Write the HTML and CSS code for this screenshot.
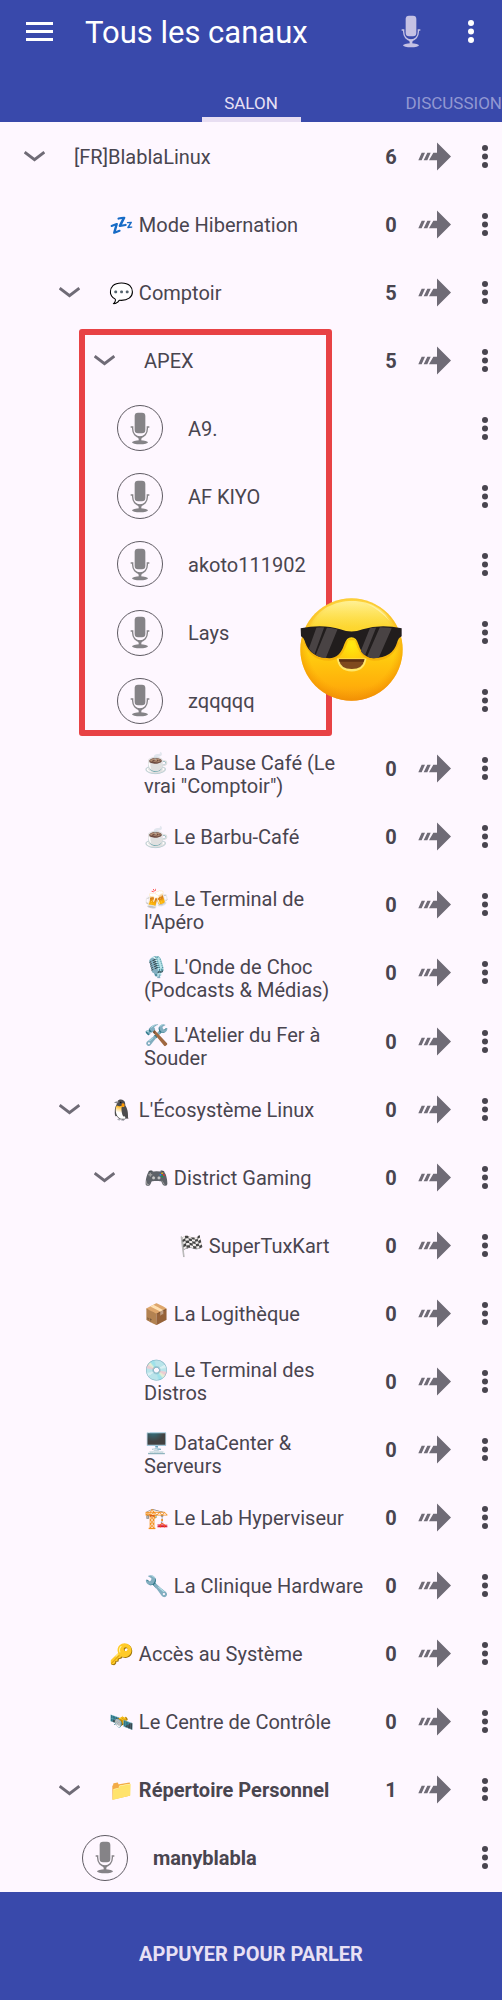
FILE: index.html
```html
<!DOCTYPE html>
<html lang="fr">
<head>
<meta charset="utf-8">
<meta name="viewport" content="width=device-width, initial-scale=1">
<title>Tous les canaux</title>
<link rel="stylesheet" href="styles.css">
</head>
<body>
<svg class="sprite" aria-hidden="true">
  <symbol id="chevron" viewBox="0 0 64 36"><path d="M2 6 32 29 62 6" fill="none" stroke="currentColor" stroke-width="9"/></symbol>
  <symbol id="dots" viewBox="0 0 6 23"><circle cx="3" cy="3" r="3"/><circle cx="3" cy="11.5" r="3"/><circle cx="3" cy="20" r="3"/></symbol>
  <symbol id="join" viewBox="0 0 99 86"><path d="M57 1 99 43 57 85V54H33L46 32H57ZM1 54 11 32H21L11 54ZM17 54 28 32H38L28 54Z"/></symbol>
  <symbol id="mic" viewBox="0 0 66 99">
    <rect x="17" y="2" width="32" height="62" rx="10"/>
    <path d="M5 45H11V50C11 65 20 75 33 75S55 65 55 50V45H61" fill="none" stroke="currentColor" stroke-width="4"/>
    <path d="M24 74H42L37 80V87H29V80Z"/>
    <ellipse cx="33" cy="91" rx="24" ry="6"/>
  </symbol>
</svg>

<header class="app-bar">
  <div class="toolbar">
    <button class="icon-button" aria-label="Menu"><svg class="icon-menu" viewBox="0 0 27 19"><path d="M0 1.5H27M0 9.5H27M0 17.5H27" stroke="currentColor" stroke-width="3"/></svg></button>
    <h1 class="title">Tous les canaux</h1>
    <button class="icon-button mic-button" aria-label="Microphone"><svg class="icon-mic"><use href="#mic"/></svg></button>
    <button class="icon-button" aria-label="Plus d'options"><svg class="icon-dots"><use href="#dots"/></svg></button>
  </div>
  <nav class="tabs">
    <a class="tab tab-active" href="#salon">SALON</a>
    <a class="tab tab-next" href="#discussion">DISCUSSION</a>
  </nav>
</header>

<main class="channels" id="salon">
  <div class="row level-0"><button class="toggle" aria-label="Réduire"><svg class="icon-chevron"><use href="#chevron"/></svg></button><span class="name">[FR]BlablaLinux</span><span class="count">6</span><button class="join" aria-label="Rejoindre"><svg class="icon-join"><use href="#join"/></svg></button><button class="more" aria-label="Options"><svg class="icon-dots"><use href="#dots"/></svg></button></div>
  <div class="row level-1"><span class="toggle"></span><span class="name">💤 Mode Hibernation</span><span class="count">0</span><button class="join" aria-label="Rejoindre"><svg class="icon-join"><use href="#join"/></svg></button><button class="more" aria-label="Options"><svg class="icon-dots"><use href="#dots"/></svg></button></div>
  <div class="row level-1"><button class="toggle" aria-label="Réduire"><svg class="icon-chevron"><use href="#chevron"/></svg></button><span class="name">💬 Comptoir</span><span class="count">5</span><button class="join" aria-label="Rejoindre"><svg class="icon-join"><use href="#join"/></svg></button><button class="more" aria-label="Options"><svg class="icon-dots"><use href="#dots"/></svg></button></div>

  <section class="highlighted">
    <div class="row level-2"><button class="toggle" aria-label="Réduire"><svg class="icon-chevron"><use href="#chevron"/></svg></button><span class="name">APEX</span><span class="count">5</span><button class="join" aria-label="Rejoindre"><svg class="icon-join"><use href="#join"/></svg></button><button class="more" aria-label="Options"><svg class="icon-dots"><use href="#dots"/></svg></button></div>
    <div class="row user level-2"><span class="avatar"><svg class="icon-mic"><use href="#mic"/></svg></span><span class="name">A9.</span><button class="more" aria-label="Options"><svg class="icon-dots"><use href="#dots"/></svg></button></div>
    <div class="row user level-2"><span class="avatar"><svg class="icon-mic"><use href="#mic"/></svg></span><span class="name">AF KIYO</span><button class="more" aria-label="Options"><svg class="icon-dots"><use href="#dots"/></svg></button></div>
    <div class="row user level-2"><span class="avatar"><svg class="icon-mic"><use href="#mic"/></svg></span><span class="name">akoto111902</span><button class="more" aria-label="Options"><svg class="icon-dots"><use href="#dots"/></svg></button></div>
    <div class="row user level-2"><span class="avatar"><svg class="icon-mic"><use href="#mic"/></svg></span><span class="name">Lays</span><button class="more" aria-label="Options"><svg class="icon-dots"><use href="#dots"/></svg></button></div>
    <div class="row user level-2"><span class="avatar"><svg class="icon-mic"><use href="#mic"/></svg></span><span class="name">zqqqqq</span><button class="more" aria-label="Options"><svg class="icon-dots"><use href="#dots"/></svg></button></div>
    <div class="frame">
      <svg class="face" viewBox="30 23 310 310" role="img" aria-label="Visage avec lunettes de soleil">
        <defs>
          <linearGradient id="skin" x1="0" y1="0" x2="0" y2="1"><stop offset="0" stop-color="#ffe04a"/><stop offset=".25" stop-color="#fdd835"/><stop offset=".55" stop-color="#ffcd0f"/><stop offset=".85" stop-color="#ffaf0a"/><stop offset="1" stop-color="#f79a0c"/></linearGradient>
          <radialGradient id="rim" cx=".5" cy=".47" r=".53"><stop offset=".8" stop-color="#f59a00" stop-opacity="0"/><stop offset="1" stop-color="#ee8a00" stop-opacity=".65"/></radialGradient>
          <radialGradient id="nose" cx=".5" cy=".5" r=".5"><stop offset="0" stop-color="#ffea10"/><stop offset="1" stop-color="#ffe500" stop-opacity="0"/></radialGradient>
          <linearGradient id="shine" x1="0" y1="0" x2="0" y2="1"><stop offset="0" stop-color="#fff3a0" stop-opacity=".9"/><stop offset="1" stop-color="#ffe45c" stop-opacity="0"/></linearGradient>
          <clipPath id="lenses"><path d="M46 117Q100 104 151 119 176 126 165 158 155 202 118 204 68 205 53 165Z"/><path d="M322 117Q268 104 217 119 192 126 203 158 213 202 250 204 300 205 315 165Z"/></clipPath>
        </defs>
        <circle cx="185" cy="178" r="154" fill="url(#skin)"/>
        <circle cx="185" cy="178" r="154" fill="url(#rim)"/>
        <path d="M60 110C82 55 135 32 188 32S294 58 314 108C270 92 220 112 185 112S100 92 60 110Z" fill="url(#shine)"/>
        <path d="M228 39Q277 53 301 94 270 59 228 39Z" fill="#fff6b8" opacity=".7"/>
        <ellipse cx="185" cy="165" rx="42" ry="48" fill="url(#nose)"/>
        <path d="M42 158Q62 213 118 212 160 211 176 145H194Q210 211 252 212 308 213 328 158L315 150H55Z" fill="#e88c00" opacity=".35"/>
        <path d="M141 205H230Q226 243 186 244 145 243 141 205Z" fill="#ffe76a"/>
        <path d="M147 207H224Q219 237 186 237 152 237 147 207Z" fill="#7f4a1e"/>
        <path d="M147 207H224L222 215H149Z" fill="#5d3113"/>
        <path d="M32 114Q98 100 151 117 169 124 185 124T219 117Q272 100 336 114V138Q326 142 322 158 309 203 252 204 219 204 206 163 200 141 185 141T163 163Q150 204 118 204 61 203 46 158 42 142 33 138Z" fill="#211d1d"/>
        <g clip-path="url(#lenses)" fill="#494344"><path d="M82 105H105L69 205H46ZM114 105H148L105 210H71Z"/><path d="M244 105H262L220 210H202ZM273 105H310L264 210H227Z"/></g>
      </svg>
    </div>
  </section>

  <div class="row level-2"><span class="toggle"></span><span class="name name-tall">☕ La Pause Café (Le vrai "Comptoir")</span><span class="count">0</span><button class="join" aria-label="Rejoindre"><svg class="icon-join"><use href="#join"/></svg></button><button class="more" aria-label="Options"><svg class="icon-dots"><use href="#dots"/></svg></button></div>
  <div class="row level-2"><span class="toggle"></span><span class="name">☕ Le Barbu-Café</span><span class="count">0</span><button class="join" aria-label="Rejoindre"><svg class="icon-join"><use href="#join"/></svg></button><button class="more" aria-label="Options"><svg class="icon-dots"><use href="#dots"/></svg></button></div>
  <div class="row level-2"><span class="toggle"></span><span class="name name-tall">🍻 Le Terminal de l'Apéro</span><span class="count">0</span><button class="join" aria-label="Rejoindre"><svg class="icon-join"><use href="#join"/></svg></button><button class="more" aria-label="Options"><svg class="icon-dots"><use href="#dots"/></svg></button></div>
  <div class="row level-2"><span class="toggle"></span><span class="name name-tall">🎙️ L'Onde de Choc (Podcasts &amp; Médias)</span><span class="count">0</span><button class="join" aria-label="Rejoindre"><svg class="icon-join"><use href="#join"/></svg></button><button class="more" aria-label="Options"><svg class="icon-dots"><use href="#dots"/></svg></button></div>
  <div class="row level-2"><span class="toggle"></span><span class="name name-tall">🛠️ L'Atelier du Fer à Souder</span><span class="count">0</span><button class="join" aria-label="Rejoindre"><svg class="icon-join"><use href="#join"/></svg></button><button class="more" aria-label="Options"><svg class="icon-dots"><use href="#dots"/></svg></button></div>
  <div class="row level-1"><button class="toggle" aria-label="Réduire"><svg class="icon-chevron"><use href="#chevron"/></svg></button><span class="name">🐧 L'Écosystème Linux</span><span class="count">0</span><button class="join" aria-label="Rejoindre"><svg class="icon-join"><use href="#join"/></svg></button><button class="more" aria-label="Options"><svg class="icon-dots"><use href="#dots"/></svg></button></div>
  <div class="row level-2"><button class="toggle" aria-label="Réduire"><svg class="icon-chevron"><use href="#chevron"/></svg></button><span class="name">🎮 District Gaming</span><span class="count">0</span><button class="join" aria-label="Rejoindre"><svg class="icon-join"><use href="#join"/></svg></button><button class="more" aria-label="Options"><svg class="icon-dots"><use href="#dots"/></svg></button></div>
  <div class="row level-3"><span class="toggle"></span><span class="name">🏁 SuperTuxKart</span><span class="count">0</span><button class="join" aria-label="Rejoindre"><svg class="icon-join"><use href="#join"/></svg></button><button class="more" aria-label="Options"><svg class="icon-dots"><use href="#dots"/></svg></button></div>
  <div class="row level-2"><span class="toggle"></span><span class="name">📦 La Logithèque</span><span class="count">0</span><button class="join" aria-label="Rejoindre"><svg class="icon-join"><use href="#join"/></svg></button><button class="more" aria-label="Options"><svg class="icon-dots"><use href="#dots"/></svg></button></div>
  <div class="row level-2"><span class="toggle"></span><span class="name">💿 Le Terminal des Distros</span><span class="count">0</span><button class="join" aria-label="Rejoindre"><svg class="icon-join"><use href="#join"/></svg></button><button class="more" aria-label="Options"><svg class="icon-dots"><use href="#dots"/></svg></button></div>
  <div class="row level-2"><span class="toggle"></span><span class="name name-tall">🖥️ DataCenter &amp; Serveurs</span><span class="count">0</span><button class="join" aria-label="Rejoindre"><svg class="icon-join"><use href="#join"/></svg></button><button class="more" aria-label="Options"><svg class="icon-dots"><use href="#dots"/></svg></button></div>
  <div class="row level-2"><span class="toggle"></span><span class="name">🏗️ Le Lab Hyperviseur</span><span class="count">0</span><button class="join" aria-label="Rejoindre"><svg class="icon-join"><use href="#join"/></svg></button><button class="more" aria-label="Options"><svg class="icon-dots"><use href="#dots"/></svg></button></div>
  <div class="row level-2"><span class="toggle"></span><span class="name">🔧 La Clinique Hardware</span><span class="count">0</span><button class="join" aria-label="Rejoindre"><svg class="icon-join"><use href="#join"/></svg></button><button class="more" aria-label="Options"><svg class="icon-dots"><use href="#dots"/></svg></button></div>
  <div class="row level-1"><span class="toggle"></span><span class="name">🔑 Accès au Système</span><span class="count">0</span><button class="join" aria-label="Rejoindre"><svg class="icon-join"><use href="#join"/></svg></button><button class="more" aria-label="Options"><svg class="icon-dots"><use href="#dots"/></svg></button></div>
  <div class="row level-1"><span class="toggle"></span><span class="name">🛰️ Le Centre de Contrôle</span><span class="count">0</span><button class="join" aria-label="Rejoindre"><svg class="icon-join"><use href="#join"/></svg></button><button class="more" aria-label="Options"><svg class="icon-dots"><use href="#dots"/></svg></button></div>
  <div class="row level-1 current"><button class="toggle" aria-label="Réduire"><svg class="icon-chevron"><use href="#chevron"/></svg></button><span class="name">📁 Répertoire Personnel</span><span class="count">1</span><button class="join" aria-label="Rejoindre"><svg class="icon-join"><use href="#join"/></svg></button><button class="more" aria-label="Options"><svg class="icon-dots"><use href="#dots"/></svg></button></div>
  <div class="row user level-1 current"><span class="avatar"><svg class="icon-mic"><use href="#mic"/></svg></span><span class="name">manyblabla</span><button class="more" aria-label="Options"><svg class="icon-dots"><use href="#dots"/></svg></button></div>
</main>

<button class="talk">APPUYER POUR PARLER</button>
</body>
</html>
```
FILE: styles.css
```css
* { box-sizing: border-box; }

body {
  margin: 0;
  min-height: 100vh;
  display: flex;
  flex-direction: column;
  background: #fef7ff;
  color: #49454f;
  font-family: Roboto, "Noto Color Emoji", sans-serif;
  font-size: 20px;
  line-height: 23px;
}

button {
  padding: 0;
  border: 0;
  background: none;
  color: inherit;
  font: inherit;
  display: flex;
  align-items: center;
  justify-content: center;
}

svg { display: block; fill: currentColor; flex: none; }
.sprite { width: 0; height: 0; position: absolute; }
.icon-menu { width: 27px; height: 19px; }
.icon-chevron { width: 21px; height: 12px; }
.icon-dots { width: 6px; height: 23px; }
.icon-join { width: 33px; height: 29px; }
.icon-mic { width: 22px; height: 33px; }

.app-bar { background: #3949ab; color: #fff; }

.toolbar {
  display: flex;
  align-items: center;
  height: 62px;
  padding: 0 11px 0 19px;
}
.icon-button { width: 40px; height: 40px; }
.title {
  flex: 1;
  margin: 0;
  padding: 4px 0 0 26px;
  font-size: 31px;
  line-height: 36px;
  font-weight: 400;
}
.mic-button { color: #c5c1e4; margin-right: 20px; }

.tabs {
  display: grid;
  grid-template-columns: 1fr 99px 1fr;
  height: 60px;
  font-size: 17px;
  line-height: 20px;
}
.tab {
  display: flex;
  align-items: flex-end;
  justify-content: center;
  padding-bottom: 9px;
  color: #e8e0f4;
  text-decoration: none;
}
.tab-active { grid-column: 2; border-bottom: 5px solid #e8def2; padding-bottom: 4px; }
.tab-next { justify-content: flex-end; color: #9298d2; }

.channels { flex: 1; display: grid; grid-auto-rows: minmax(68px, 1fr); }

.row { --indent: 0px; display: flex; align-items: center; padding-left: calc(14px + var(--indent)); }
.level-1 { --indent: 35px; }
.level-2 { --indent: 70px; }
.level-3 { --indent: 105px; }

.toggle { width: 40px; height: 40px; margin-right: 20px; color: #6f6b76; }
.name { flex: 1; min-width: 0; padding-top: 2px; }
.name-tall { padding-top: 12px; }
.count { width: 50px; padding-top: 2px; text-align: center; font-weight: 700; }
.join { width: 36px; height: 48px; color: #6f6b76; }
.more { width: 34px; height: 48px; margin-left: 16px; }

.user { padding-left: calc(47px + var(--indent)); }
.avatar {
  display: flex;
  align-items: center;
  justify-content: center;
  width: 46px;
  height: 46px;
  margin-right: 25px;
  border: 1px solid #5f5b63;
  border-radius: 50%;
  color: #858387;
}
.current { font-weight: 700; }

.highlighted {
  position: relative;
  grid-row: span 6;
  display: grid;
  grid-auto-rows: minmax(68px, 1fr);
}
.frame {
  position: absolute;
  top: 3px;
  bottom: -1px;
  left: 79px;
  width: 253px;
  border: 6px solid #e84245;
  border-radius: 3px;
  pointer-events: none;
}
.face { position: absolute; top: 263px; left: 215px; width: 103px; height: 103px; }

.talk {
  width: 100%;
  height: 108px;
  padding-top: 16px;
  background: #3949ab;
  color: #e8e0f4;
  font-weight: 700;
}
```
